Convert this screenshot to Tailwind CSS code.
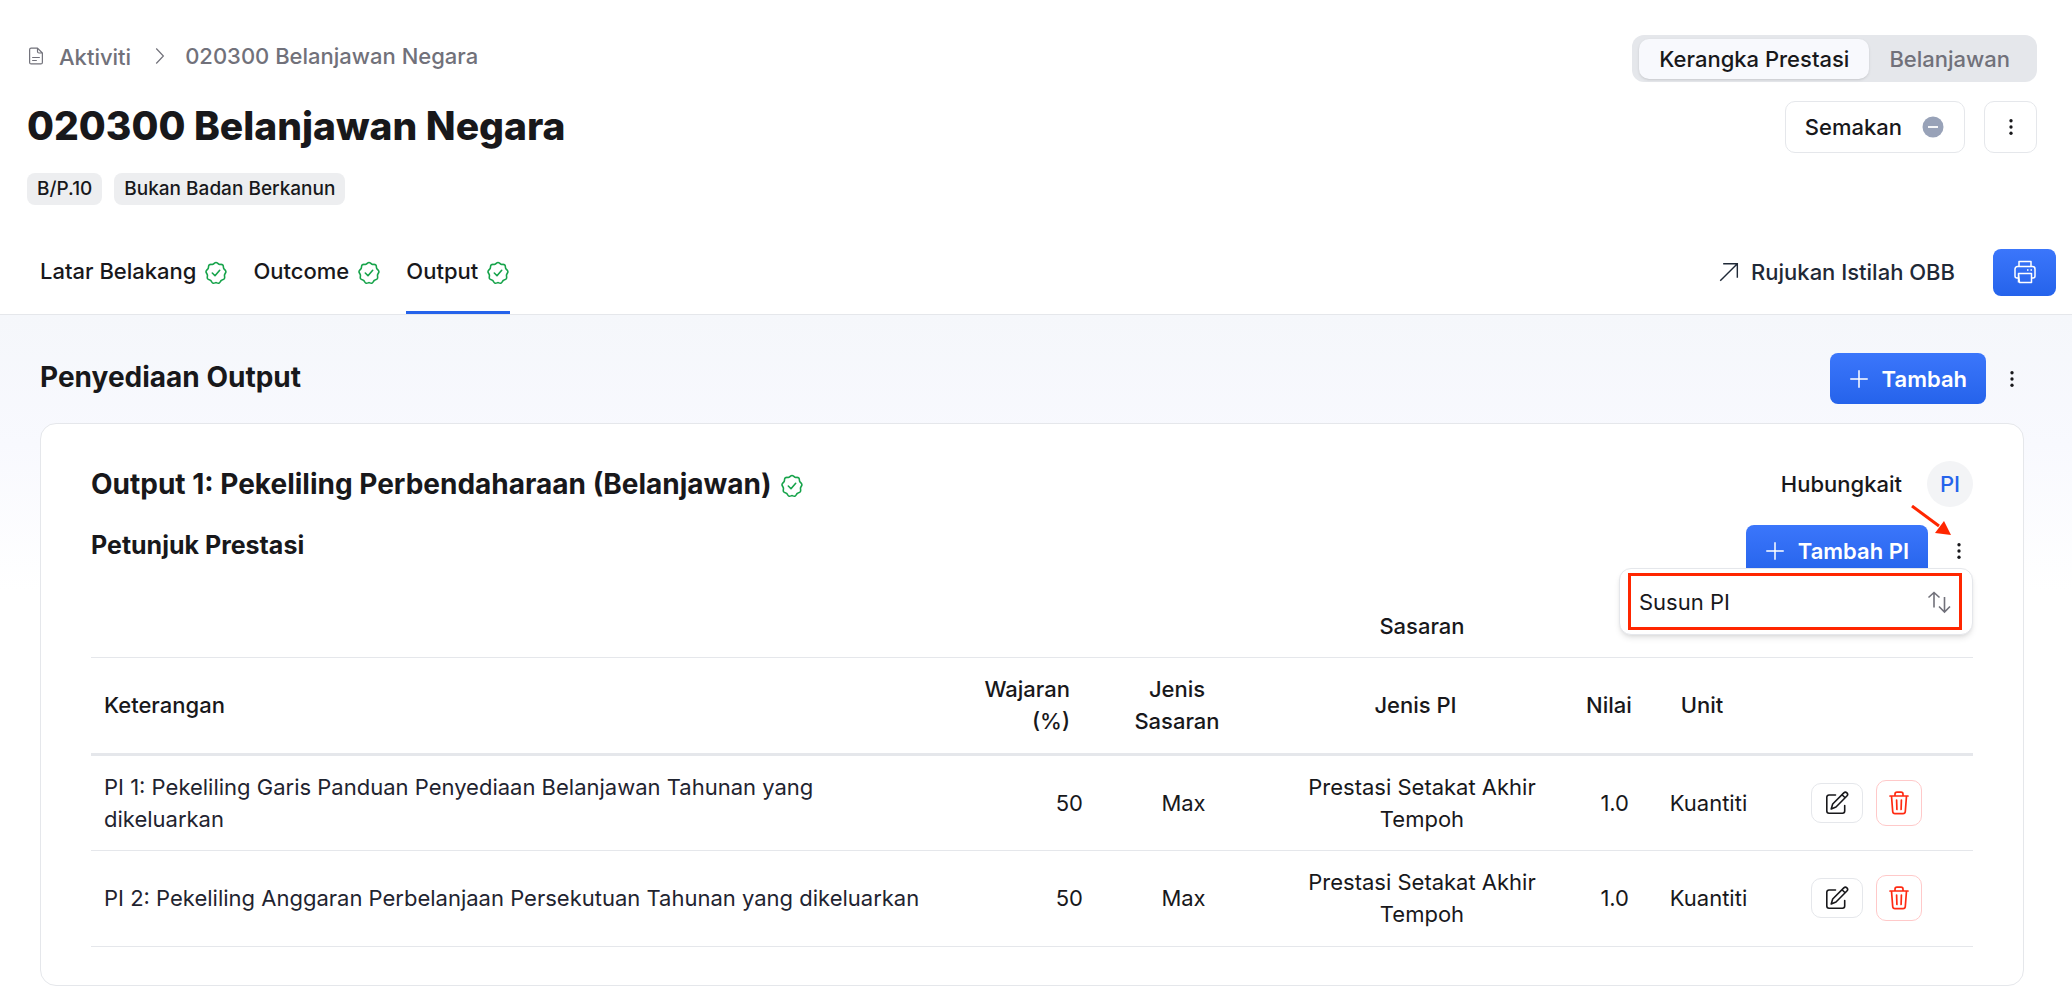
<!DOCTYPE html>
<html lang="ms">
<head>
  <meta charset="UTF-8" />
  <meta name="viewport" content="width=device-width, initial-scale=1.0"/>
  <title>020300 Belanjawan Negara</title>
  <script src="https://cdn.jsdelivr.net/npm/@tailwindcss/browser@4"></script>
</head>
<body class="min-h-screen bg-white font-['Inter',sans-serif] text-[22px] leading-8 text-[#18181b]">
  <svg class="hidden">
    <symbol id="badge" viewBox="0 0 24 24" fill="none" stroke="currentColor" stroke-width="1.6" stroke-linecap="round" stroke-linejoin="round">
      <path d="M12 1.500c1.300 0 2 1.400 3.100 1.800s2.600-.3 3.600.6.500 2.400 1 3.500 2 1.800 2.200 3.100-1.200 2.200-1.400 3.400.6 2.600-.1 3.700-2.200 1-3.100 1.800-1.300 2.300-2.500 2.800-2.100-.6-2.800-.6-1.700 1-2.900.6-1.600-2-2.500-2.800-2.400-.7-3.100-1.800.2-2.500-.1-3.700-1.600-2.100-1.400-3.400 1.700-2 2.200-3.100 0-2.600 1-3.500 2.500-.2 3.700-.6 1.800-1.800 3.100-1.800z"/>
      <path d="m8.300 12 2.700 2.700 4.700-5.400"/>
    </symbol>
    <symbol id="dots" viewBox="0 0 24 24" fill="currentColor">
      <circle cx="12" cy="4.500" r="2"/><circle cx="12" cy="12" r="2"/><circle cx="12" cy="19.500" r="2"/>
    </symbol>
    <symbol id="plus" viewBox="0 0 24 24" fill="none" stroke="currentColor" stroke-width="1.800">
      <path d="M12 1.500v21M1.500 12h21"/>
    </symbol>
    <symbol id="edit" viewBox="0 0 24 24" fill="none" stroke="currentColor" stroke-width="1.6" stroke-linecap="round" stroke-linejoin="round">
      <path d="M10.500 4H4a2.200 2.200 0 0 0-2.200 2.200V20A2.200 2.200 0 0 0 4 22.200h13.500a2.200 2.200 0 0 0 2.200-2.200v-5.500"/>
      <path d="m6.200 18 1.500-5L18.800 1.900a2.100 2.100 0 0 1 3.100 3.100L11 16zM17 3.700 20.100 6.800"/>
    </symbol>
    <symbol id="trash" viewBox="0 0 24 24" fill="none" stroke="currentColor" stroke-width="1.700" stroke-linecap="round" stroke-linejoin="round">
      <path d="M3 5h18M8 5V3.200C8 2 8.800 1.200 10 1.200h4c1.200 0 2 .8 2 2V5M4.500 5l1.200 15.500c.1 1.300 1 2.200 2.300 2.200h8c1.300 0 2.200-.9 2.300-2.200L19.500 5M9.600 9l.3 9.500M14.400 9l-.3 9.500"/>
    </symbol>
  </svg>

  <header class="border-b border-gray-200">
    <div class="flex justify-between pt-[35px] pr-[35px] pl-[27px]">
      <div>
        <nav aria-label="Breadcrumb" class="flex items-center pt-1 font-medium text-[#71717a]">
          <svg class="size-[18px]" viewBox="0 0 24 24" fill="none" stroke="currentColor" stroke-width="1.6" stroke-linecap="round" stroke-linejoin="round">
            <path d="M3.500 3.500c0-1.200.8-2 2-2H14l6.500 6.500v12.500c0 1.200-.8 2-2 2h-13c-1.200 0-2-.8-2-2zM14 1.500V6c0 1.200.8 2 2 2h4.500M7.500 14h9M7.500 18h5"/>
          </svg>
          <a href="#" class="ml-[14px] pt-[2px]">Aktiviti</a>
          <svg class="mr-4 ml-5 size-[18px]" viewBox="0 0 24 24" fill="none" stroke="currentColor" stroke-width="1.6"><path d="m7 2 9.500 10L7 22"/></svg>
          <a href="#">020300 Belanjawan Negara</a>
        </nav>
        <h1 class="mt-[25px] text-[39px] leading-[56px] font-extrabold">020300 Belanjawan Negara</h1>
        <div class="mt-[19px] flex gap-3 text-[19px] font-medium">
          <span class="rounded-lg bg-[#edeef0] px-[10px]">B/P.10</span>
          <span class="rounded-lg bg-[#edeef0] px-[10px]">Bukan Badan Berkanun</span>
        </div>
      </div>
      <div class="flex flex-col items-end gap-[19px]">
        <div class="flex h-[47px] items-center rounded-xl bg-gray-200 px-[7px] font-medium">
          <button class="h-10 rounded-[10px] bg-[#f8f9fd] px-5 shadow">Kerangka Prestasi</button>
          <button class="h-10 px-5 text-[#71717a]">Belanjawan</button>
        </div>
        <div class="flex gap-[19px]">
          <button class="flex h-[52px] items-center gap-[19px] rounded-[10px] border border-gray-200 px-[19px] font-medium">
            Semakan
            <svg class="size-6" viewBox="0 0 24 24"><circle cx="12" cy="12" r="10.500" fill="#98a2b8"/><path d="M7 12h10" stroke="#fff" stroke-width="1.800"/></svg>
          </button>
          <button aria-label="Menu" class="flex h-[52px] w-[53px] items-center justify-center rounded-[10px] border border-gray-200"><svg class="size-5"><use href="#dots"/></svg></button>
        </div>
      </div>
    </div>

    <div class="mt-[25px] flex items-center justify-between pr-4 pl-10 font-medium">
      <nav class="flex gap-[25px]">
        <a href="#" class="flex h-[84px] items-center gap-2 border-b-3 border-transparent">Latar Belakang <svg class="mt-1 size-6 text-[#16a34a]"><use href="#badge"/></svg></a>
        <a href="#" class="flex h-[84px] items-center gap-2 border-b-3 border-transparent">Outcome <svg class="mt-1 size-6 text-[#16a34a]"><use href="#badge"/></svg></a>
        <a href="#" aria-current="page" class="flex h-[84px] items-center gap-2 border-b-3 border-[#2563eb]">Output <svg class="mt-1 size-6 text-[#16a34a]"><use href="#badge"/></svg></a>
      </nav>
      <div class="flex items-center gap-[38px]">
        <a href="#" class="flex items-center gap-3 text-[#1f2937]">
          <svg class="size-5" viewBox="0 0 24 24" fill="none" stroke="currentColor" stroke-width="1.700"><path d="M1.500 22.500 22 2M5 2h17v17"/></svg>
          Rujukan Istilah OBB
        </a>
        <button aria-label="Cetak" class="flex h-[47px] w-[63px] items-center justify-center rounded-lg bg-linear-to-b from-[#3b76fb] to-[#2563eb] text-white">
          <svg class="size-6" viewBox="0 0 24 24" fill="none" stroke="currentColor" stroke-width="1.500" stroke-linejoin="round"><path d="M6 6.500v-5h12v5M5.500 18H4a2 2 0 0 1-2-2V9a2.500 2.500 0 0 1 2.500-2.500h15A2.500 2.500 0 0 1 22 9v7a2 2 0 0 1-2 2h-1.500M5.500 13.500h13v9h-12zM5.500 13.500v9M14 10h1.500M17.500 10H19"/></svg>
        </button>
      </div>
    </div>
  </header>

  <main class="bg-[linear-gradient(#f5f7fb,#f8f9fe_130px,#fff_275px)] px-10 pt-[38px] pb-[2px]">
    <div class="flex items-center justify-between">
      <h2 class="pb-1 text-[28px] font-bold">Penyediaan Output</h2>
      <div class="flex items-center gap-4">
        <button class="flex h-[51px] items-center gap-[13px] rounded-lg bg-linear-to-b from-[#3b76fb] to-[#2563eb] px-[19px] font-semibold text-white"><svg class="size-5"><use href="#plus"/></svg>Tambah</button>
        <button aria-label="Menu" class="mr-[10px]"><svg class="size-5"><use href="#dots"/></svg></button>
      </div>
    </div>

    <section class="mt-[19px] mr-2 rounded-2xl border border-gray-200 bg-white px-[50px] pt-[37px] pb-[38px]">
      <div class="flex items-center justify-between">
        <h3 class="flex items-center gap-2 text-[28px] font-bold">Output 1: Pekeliling Perbendaharaan (Belanjawan) <svg class="mt-1 size-6 text-[#16a34a]"><use href="#badge"/></svg></h3>
        <div class="flex items-center gap-[25px] font-medium">
          Hubungkait
          <span class="flex size-[46px] items-center justify-center rounded-full bg-gray-100 text-[#2563eb]">PI</span>
        </div>
      </div>
      <div class="relative mt-[18px] flex items-center justify-between">
        <h4 class="pb-3 text-[25px] font-bold">Petunjuk Prestasi</h4>
        <div class="flex items-center gap-[21px]">
          <button class="flex h-[51px] items-center gap-[13px] rounded-lg bg-linear-to-b from-[#3b76fb] to-[#2563eb] px-[19px] font-semibold text-white"><svg class="size-5"><use href="#plus"/></svg>Tambah PI</button>
          <button aria-label="Menu" class="mr-1"><svg class="size-5"><use href="#dots"/></svg></button>
        </div>
        <div class="absolute top-[43px] right-0 w-[354px] rounded-xl border border-gray-200 bg-white py-1 pr-[10px] pl-2 shadow-md">
          <button class="flex h-[57px] w-full items-center justify-between border-3 border-[#ff2600] px-2">
            Susun PI
            <svg class="size-6 text-[#71717a]" viewBox="0 0 24 24" fill="none" stroke="currentColor" stroke-width="1.600"><path d="M7 17.500V2.500M1.500 7.500 7 2.500 12.500 7.500M17.500 7v15M12 16.500l5.500 5.500 5.500-5.500"/></svg>
          </button>
        </div>
        <svg class="absolute -top-5 right-[22px] h-[31px] w-10" viewBox="0 0 40 31"><path d="M1 1 28 21" stroke="#ff2600" stroke-width="3"/><path d="M40 30 33 16 24 28z" fill="#ff2600"/></svg>
      </div>

      <table class="mt-[25px] w-full table-fixed">
        <colgroup>
          <col /><col class="w-[155px]" /><col class="w-[175px]" /><col class="w-[302px]" /><col class="w-[69px]" /><col class="w-[133px]" /><col class="w-[198px]" />
        </colgroup>
        <thead>
          <tr class="border-b border-gray-200">
            <td colspan="3"></td>
            <th class="h-[56px] pb-[5px] font-medium">Sasaran</th>
            <td colspan="3"></td>
          </tr>
          <tr class="h-[97px] border-b-3 border-gray-200">
            <th class="px-[13px] text-left font-medium">Keterangan</th>
            <th class="pr-[26px] text-right font-medium">Wajaran<br />(%)</th>
            <th class="pr-[26px] pl-[13px] font-medium">Jenis Sasaran</th>
            <th class="pr-[26px] pl-[13px] font-medium">Jenis PI</th>
            <th class="pl-[13px] text-left font-medium">Nilai</th>
            <th class="pr-[26px] pl-[13px] font-medium">Unit</th>
            <td></td>
          </tr>
        </thead>
        <tbody>
          <tr class="h-24 border-b border-gray-200">
            <td class="px-[13px] text-[#1f2430]">PI 1: Pekeliling Garis Panduan Penyediaan Belanjawan Tahunan yang dikeluarkan</td>
            <td class="px-[13px] text-right">50</td>
            <td class="text-center">Max</td>
            <td class="px-[13px] text-center">Prestasi Setakat Akhir Tempoh</td>
            <td class="px-[13px] text-right">1.0</td>
            <td class="text-center">Kuantiti</td>
            <td>
              <div class="flex items-center gap-[13px] pl-9">
                <button aria-label="Edit" class="flex h-10 w-[52px] items-center justify-center rounded-[10px] border border-gray-200"><svg class="size-6"><use href="#edit"/></svg></button>
                <button aria-label="Padam" class="flex size-[46px] items-center justify-center rounded-[10px] border border-red-200 text-[#ff2a12]"><svg class="size-6"><use href="#trash"/></svg></button>
              </div>
            </td>
          </tr>
          <tr class="h-24 border-b border-gray-200">
            <td class="px-[13px] text-[#1f2430]">PI 2: Pekeliling Anggaran Perbelanjaan Persekutuan Tahunan yang dikeluarkan</td>
            <td class="px-[13px] text-right">50</td>
            <td class="text-center">Max</td>
            <td class="px-[13px] text-center">Prestasi Setakat Akhir Tempoh</td>
            <td class="px-[13px] text-right">1.0</td>
            <td class="text-center">Kuantiti</td>
            <td>
              <div class="flex items-center gap-[13px] pl-9">
                <button aria-label="Edit" class="flex h-10 w-[52px] items-center justify-center rounded-[10px] border border-gray-200"><svg class="size-6"><use href="#edit"/></svg></button>
                <button aria-label="Padam" class="flex size-[46px] items-center justify-center rounded-[10px] border border-red-200 text-[#ff2a12]"><svg class="size-6"><use href="#trash"/></svg></button>
              </div>
            </td>
          </tr>
        </tbody>
      </table>
    </section>
  </main>
</body>
</html>
